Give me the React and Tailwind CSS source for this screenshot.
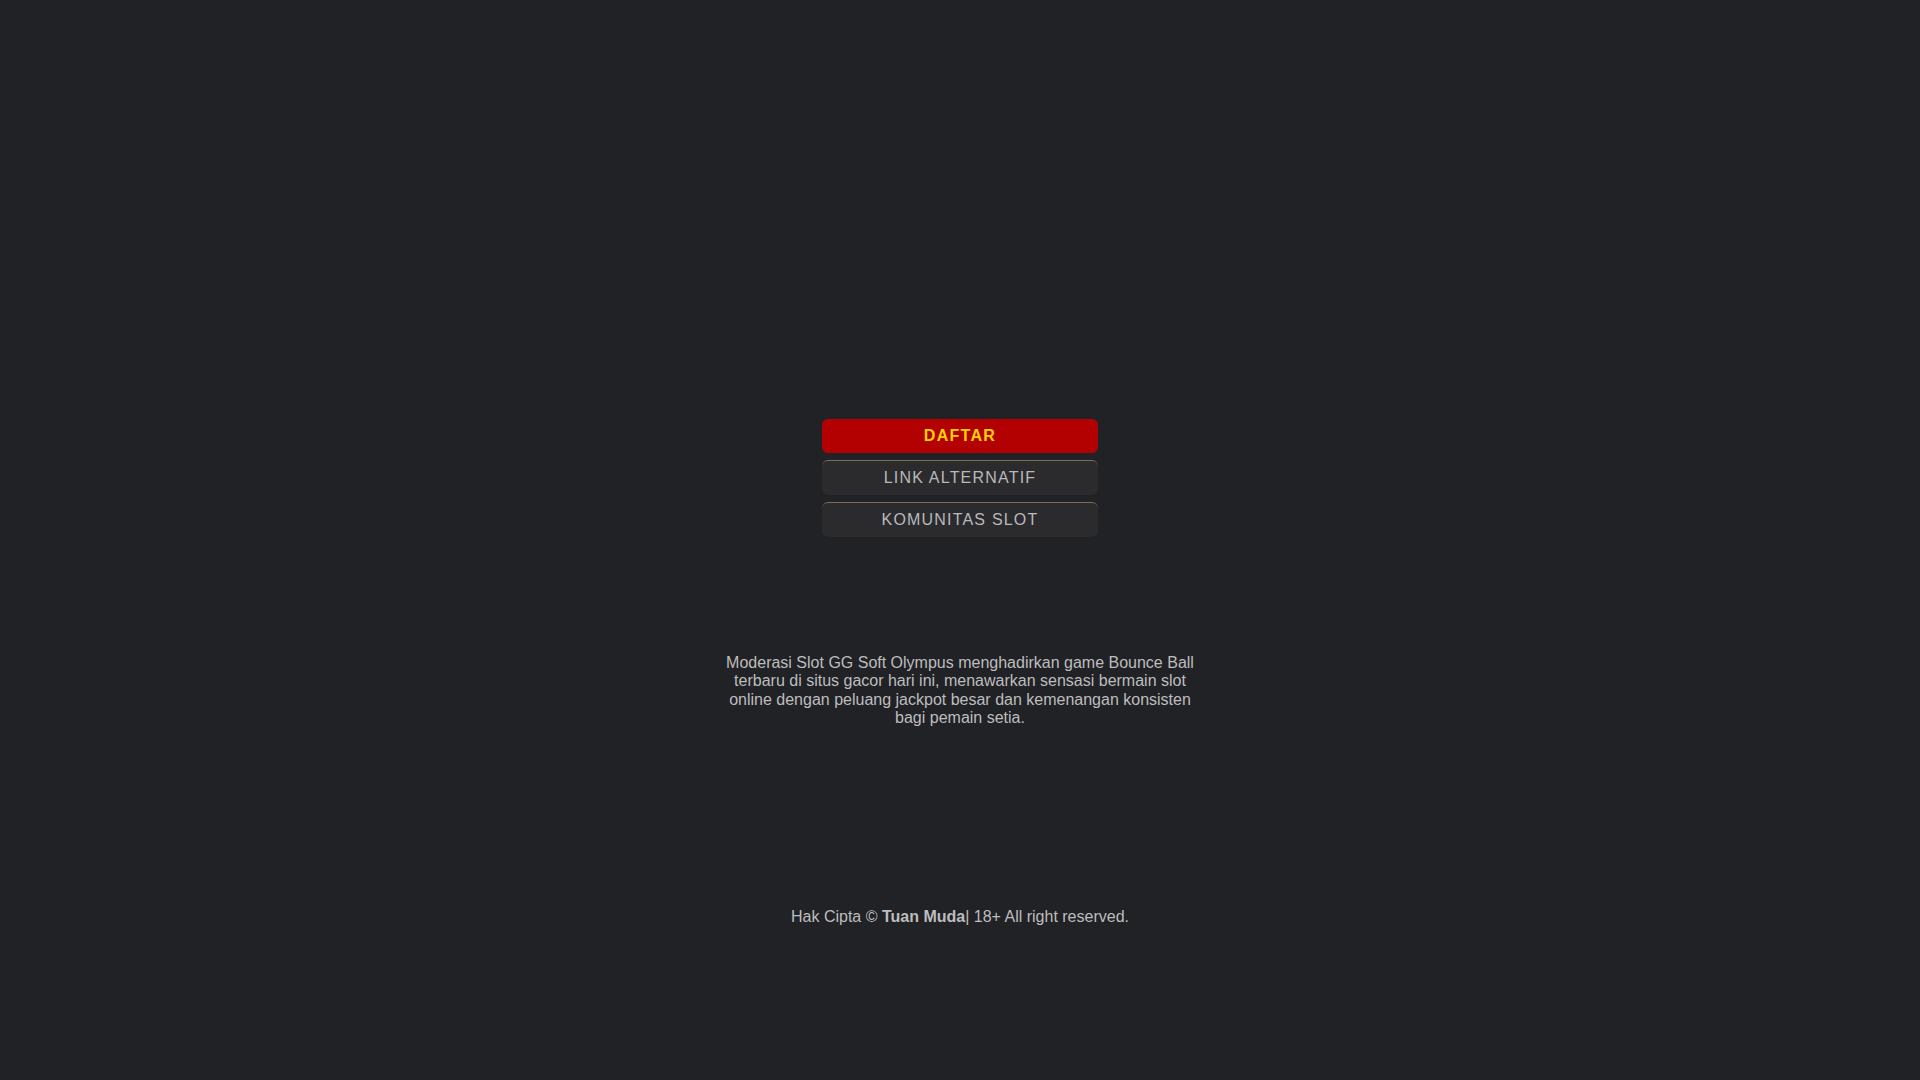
import React from 'react';

const links = [
  { label: 'DAFTAR', primary: true },
  { label: 'LINK ALTERNATIF' },
  { label: 'KOMUNITAS SLOT' },
];

const App = () => {
  return (
    <div className="min-h-screen bg-[#212226] font-['Liberation_Sans',Arial,sans-serif] text-[#bdbdbd] flex flex-col items-center pt-[419px]">
      <div className="w-[276px] flex flex-col gap-[7px]">
        {links.map((l) =>
          l.primary ? (
            <a
              key={l.label}
              href="#"
              className="h-[34px] rounded-[6px] bg-[#b30000] text-[#ffd200] font-bold text-[16px] tracking-[1.3px] flex items-center justify-center"
            >
              {l.label}
            </a>
          ) : (
            <a
              key={l.label}
              href="#"
              className="h-[35px] rounded-[6px] bg-[#2b2b2d] border-t border-[#7d6d58] text-[#b9b9bb] text-[16px] tracking-[1.2px] flex items-center justify-center"
            >
              {l.label}
            </a>
          )
        )}
      </div>

      <p className="mt-[117px] w-[480px] text-center text-[16px] leading-[18.4px] text-[#bdbdbd]">
        Moderasi Slot GG Soft Olympus menghadirkan game Bounce Ball terbaru di situs gacor hari ini, menawarkan sensasi bermain slot online dengan peluang jackpot besar dan kemenangan konsisten bagi pemain setia.
      </p>

      <p className="mt-[180px] text-[16px] leading-[18.4px] text-[#bdbdbd]">
        Hak Cipta © <b>Tuan Muda</b>| 18+ All right reserved.
      </p>
    </div>
  );
};

export default App;
